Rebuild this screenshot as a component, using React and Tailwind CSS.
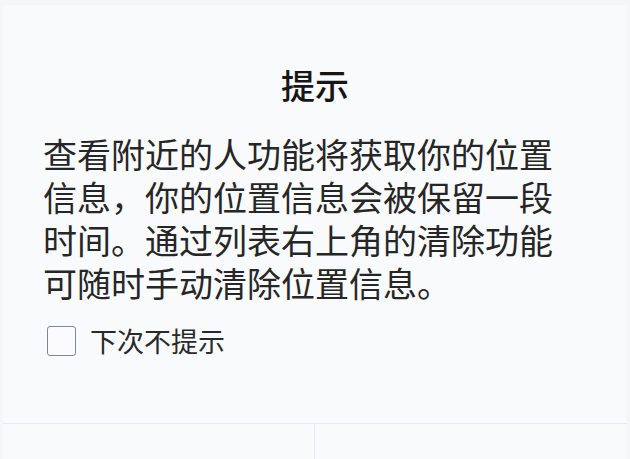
export default function App() {
  return (
    <div
      className="w-[630px] h-[459px] overflow-hidden bg-[#f5f6f8] pt-[5px] px-[3px]"
      style={{ fontFamily: '"Noto Sans CJK SC", "Noto Sans", sans-serif' }}
    >
      <div className="h-full flex flex-col bg-[#f9fafc] rounded-t-[4px]">
        <h2 className="mt-[54px] text-center text-[34px] leading-[52px] font-medium text-[#161616]">
          提示
        </h2>
        <p className="mt-[21px] ml-[40px] w-[514px] text-[34px] leading-[43px] text-[#262626]">
          查看附近的人功能将获取你的位置信息，你的位置信息会被保留一段时间。通过列表右上角的清除功能可随时手动清除位置信息。
        </p>
        <label className="mt-[22px] ml-[44px] flex items-center gap-[14px]">
          <span className="w-[29px] h-[30px] rounded-[3px] border-[1.5px] border-[#85858b] bg-[#fbfbfd]" />
          <span className="text-[27px] leading-[30px] text-[#2a2a2a]">下次不提示</span>
        </label>
        <div className="flex-1" />
        <div className="h-[36px] grid grid-cols-2 border-t border-[#e8eaee]">
          <button className="border-r border-[#e8eaee]" />
          <button />
        </div>
      </div>
    </div>
  )
}
